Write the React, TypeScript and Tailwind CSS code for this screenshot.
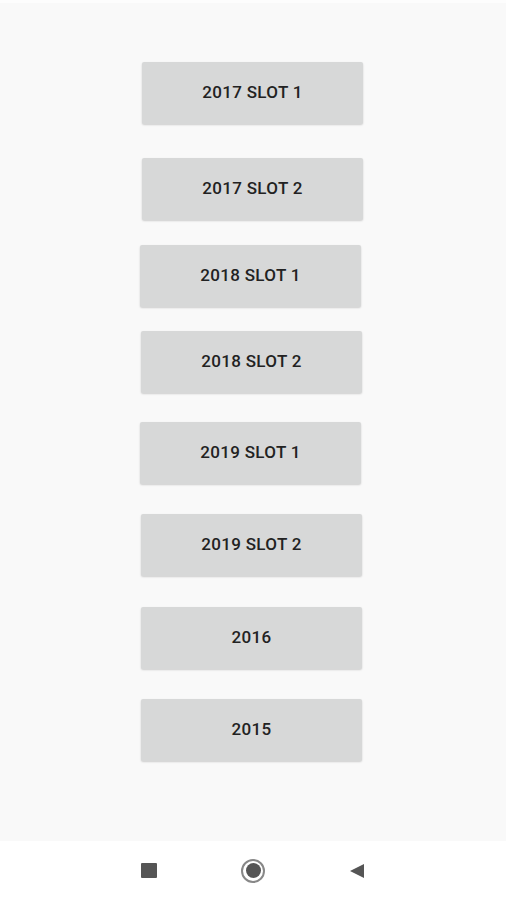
import React from "react";

const buttons: { label: string; mt: string; ml: string }[] = [
  { label: "2017 SLOT 1", mt: "mt-[59px]", ml: "ml-[142px]" },
  { label: "2017 SLOT 2", mt: "mt-[34px]", ml: "ml-[142px]" },
  { label: "2018 SLOT 1", mt: "mt-[25px]", ml: "ml-[140px]" },
  { label: "2018 SLOT 2", mt: "mt-[24px]", ml: "ml-[141px]" },
  { label: "2019 SLOT 1", mt: "mt-[29px]", ml: "ml-[140px]" },
  { label: "2019 SLOT 2", mt: "mt-[30px]", ml: "ml-[141px]" },
  { label: "2016", mt: "mt-[31px]", ml: "ml-[141px]" },
  { label: "2015", mt: "mt-[30px]", ml: "ml-[141px]" },
];

export default function App() {
  return (
    <div
      className="w-[506px] h-[900px] flex flex-col bg-[#f9f9f9] overflow-hidden"
      style={{ fontFamily: "Roboto, 'Liberation Sans', sans-serif" }}
    >
      <div className="h-[3px] bg-[#fdfdfd]" />
      <div className="flex-1 flex flex-col">
        {buttons.map((b) => (
          <div
            key={b.label}
            className={`${b.mt} ${b.ml} w-[221px] h-[62px] bg-[#d7d8d8] rounded-[2px] shadow-[0_1px_2px_rgba(0,0,0,0.18)] flex items-center justify-center text-[17px] font-medium tracking-[0.02em] text-[#222222]`}
          >
            {b.label}
          </div>
        ))}
      </div>
      <div className="h-[59px] bg-white flex items-center">
        <div className="ml-[141px] w-[16px] h-[15px] bg-[#555555] rounded-[1px]" />
        <div className="ml-[84px] w-[24px] h-[24px] rounded-full border-[2px] border-[#888888] flex items-center justify-center">
          <div className="w-[15px] h-[15px] rounded-full bg-[#555555]" />
        </div>
        <svg className="ml-[84px]" width="16" height="16" viewBox="0 0 16 16">
          <polygon points="15,1 15,15 1,8" fill="#555555" />
        </svg>
      </div>
    </div>
  );
}
